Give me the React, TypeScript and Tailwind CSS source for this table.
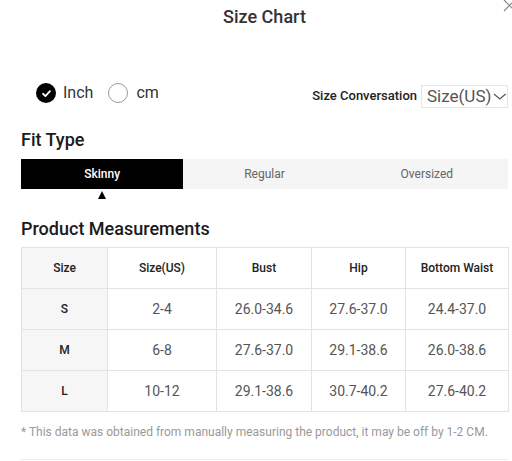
const rows = [
  { size: 'S', us: '2-4', bust: '26.0-34.6', hip: '27.6-37.0', waist: '24.4-37.0' },
  { size: 'M', us: '6-8', bust: '27.6-37.0', hip: '29.1-38.6', waist: '26.0-38.6' },
  { size: 'L', us: '10-12', bust: '29.1-38.6', hip: '30.7-40.2', waist: '27.6-40.2' },
]

const headers = ['Size', 'Size(US)', 'Bust', 'Hip', 'Bottom Waist']

export default function App() {
  return (
    <div
      className="relative h-[461px] w-[512px] overflow-hidden bg-white pl-[21px] pr-[4px] pt-[5px]"
      style={{ fontFamily: 'Roboto, "Liberation Sans", sans-serif' }}
    >
      {/* close */}
      <svg className="absolute left-[503px] top-[-1px] h-[13px] w-[13px]" viewBox="0 0 13 13">
        <path d="M1 1 L12 12 M12 1 L1 12" stroke="#888" strokeWidth="1.2" fill="none" />
      </svg>

      <h1 className="text-center text-[18px] leading-[24px] font-medium text-[#333]">Size Chart</h1>

      {/* unit + conversion */}
      <div className="mt-[52px] flex items-start justify-between">
        <div className="ml-[15px] flex h-[24px] items-center">
          <span className="flex h-[20px] w-[20px] items-center justify-center rounded-full bg-black">
            <svg viewBox="0 0 12 12" className="h-[11px] w-[11px]">
              <path d="M2.2 6.3 L4.8 8.8 L9.8 3.4" stroke="#fff" strokeWidth="2" fill="none" strokeLinecap="round" strokeLinejoin="round" />
            </svg>
          </span>
          <span className="ml-[7px] text-[16px] leading-[24px] text-[#333]">Inch</span>
          <span className="ml-[15px] h-[20px] w-[20px] rounded-full border border-[#999]" />
          <span className="ml-[8px] text-[16px] leading-[24px] text-[#333]">cm</span>
        </div>
        <div className="mt-[4px] flex h-[22px] items-center">
          <span className="text-[13px] font-medium text-[#222]">Size Conversation</span>
          <div className="ml-[4px] flex h-[23px] w-[87px] items-center border border-[#e6e6e6] pl-[5px]">
            <span className="text-[17px] leading-[20px] text-[#555]">Size(US)</span>
            <svg viewBox="0 0 14 7" className="ml-[2px] h-[7px] w-[14px]">
              <path d="M1 1 L7 6 L13 1" stroke="#555" strokeWidth="1.2" fill="none" />
            </svg>
          </div>
        </div>
      </div>

      <h2 className="mt-[21px] text-[18px] leading-[24px] font-medium text-[#1a1a1a]">Fit Type</h2>

      <div className="mt-[7px] grid h-[30px] grid-cols-3 bg-[#f5f5f5] text-[12px]">
        <div className="flex items-center justify-center bg-black font-medium text-white">Skinny</div>
        <div className="flex items-center justify-center text-[#666]">Regular</div>
        <div className="flex items-center justify-center text-[#666]">Oversized</div>
      </div>
      <div className="grid grid-cols-3">
        <div className="flex justify-center pt-[2px]">
          <span className="h-0 w-0 border-x-[4.5px] border-b-[8px] border-x-transparent border-b-black" />
        </div>
      </div>

      <h2 className="mt-[18px] text-[18px] leading-[24px] font-medium text-[#1a1a1a]">Product Measurements</h2>

      <table className="mt-[6px] w-[487px] table-fixed border-collapse text-center">
        <colgroup>
          <col className="w-[86px]" />
          <col className="w-[109px]" />
          <col className="w-[95px]" />
          <col className="w-[94px]" />
          <col className="w-[103px]" />
        </colgroup>
        <thead>
          <tr className="h-[41px]">
            {headers.map((h, i) => (
              <th
                key={h}
                className={`border border-[#e3e3e3] p-0 text-[12px] font-medium text-[#222] ${i === 0 ? 'bg-[#f6f6f6]' : 'bg-white'}`}
              >
                {h}
              </th>
            ))}
          </tr>
        </thead>
        <tbody>
          {rows.map((r) => (
            <tr key={r.size} className="h-[41px]">
              <td className="border border-[#e3e3e3] bg-[#f6f6f6] p-0 text-[12px] font-medium text-[#222]">{r.size}</td>
              <td className="border border-[#e3e3e3] p-0 text-[14px] text-[#555]">{r.us}</td>
              <td className="border border-[#e3e3e3] p-0 text-[14px] text-[#555]">{r.bust}</td>
              <td className="border border-[#e3e3e3] p-0 text-[14px] text-[#555]">{r.hip}</td>
              <td className="border border-[#e3e3e3] p-0 text-[14px] text-[#555]">{r.waist}</td>
            </tr>
          ))}
        </tbody>
      </table>

      <p className="mt-[12px] text-[12px] leading-[16px] text-[#999]">
        * This data was obtained from manually measuring the product, it may be off by 1-2 CM.
      </p>

      <div className="mt-[19px] h-px w-[487px] bg-[#ececec]" />
    </div>
  )
}
